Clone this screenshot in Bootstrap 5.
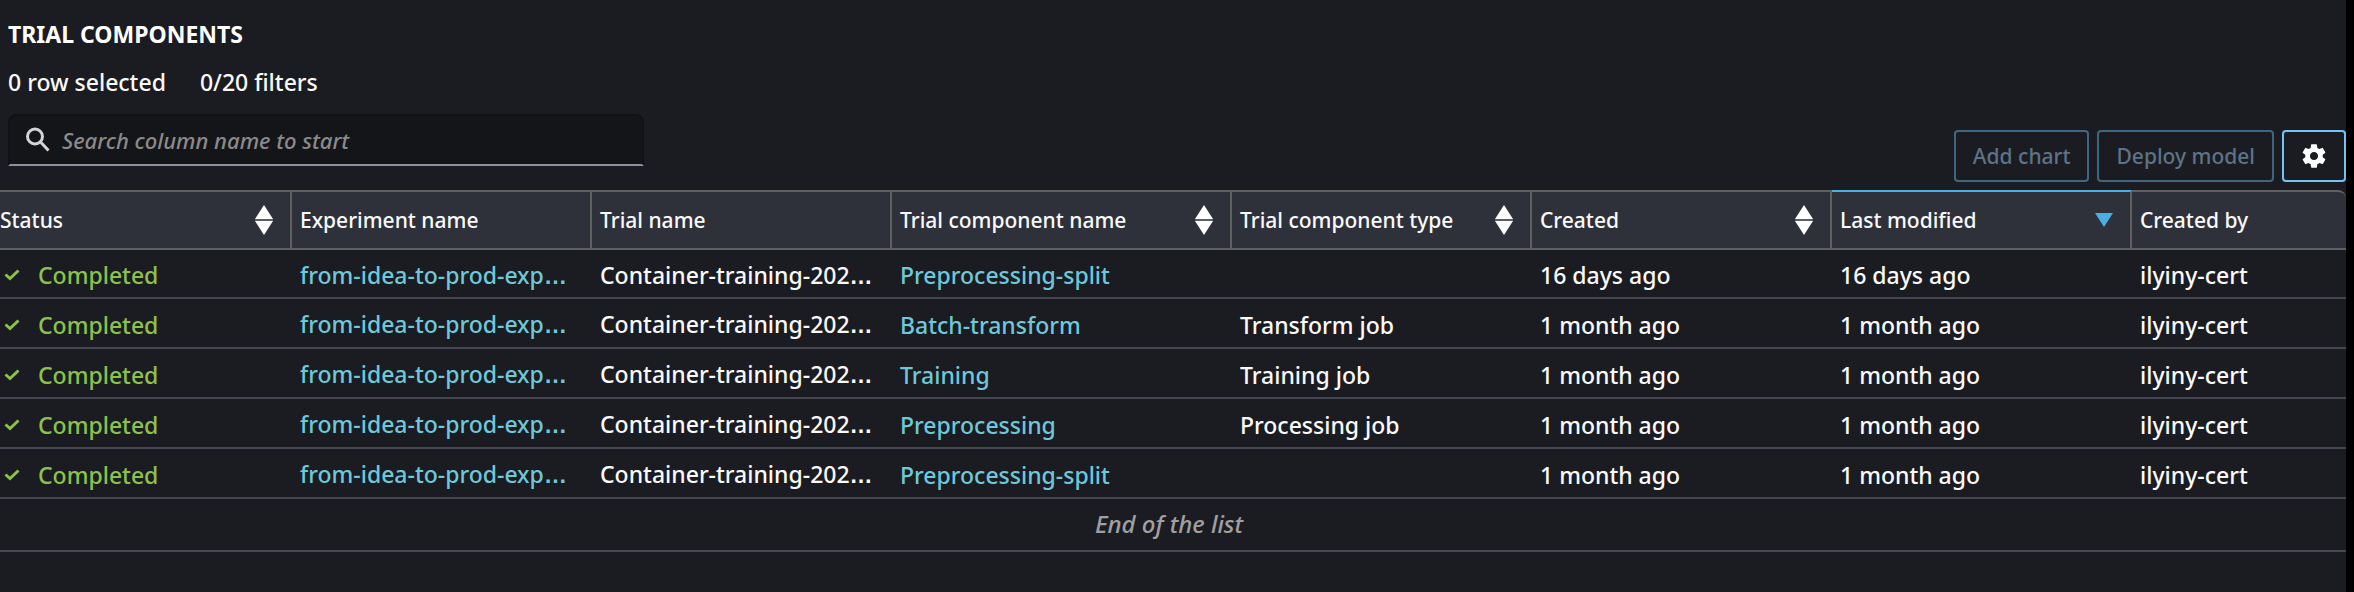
<!DOCTYPE html>
<html lang="en" data-bs-theme="dark">
<head>
<meta charset="utf-8">
<meta name="viewport" content="width=device-width, initial-scale=1">
<title>Trial components</title>
<link href="https://cdn.jsdelivr.net/npm/bootstrap@5.3.0/dist/css/bootstrap.min.css" rel="stylesheet">
<style>
  body { background: #1b1c21; color: #fafafa; font-family: "Noto Sans", "Open Sans", sans-serif; font-size: 23px; font-weight: 500; line-height: 32px; }
  .trial-panel { border-right: 8px solid #000; }
  .panel-head { padding: 18px 8px 0; }
  .panel-title { font-size: 23px; font-weight: 700; line-height: 32px; }
  .counts { gap: 34px; }
  .search-box { width: 636px; max-width: 100%; height: 52px; background: #141519; border: 2px solid #111216; border-bottom-color: #8e8fa0; border-radius: 8px 8px 0 0; padding: 0 16px; gap: 12px; }
  .search-box input { background: transparent; border: 0; outline: 0; color: inherit; font-style: italic; font-size: 22px; font-weight: 500; padding: 0; }
  .search-box input::placeholder { color: #8a8a8a; opacity: 1; }
  .tool-btn { height: 52px; border: 2px solid #3f6680; border-radius: 4px; color: #5d7389; font-size: 21px; font-weight: 500; padding: 0 17px; line-height: 32px; }
  .tool-btn:disabled { opacity: 1; color: #5d7389; border-color: #3f6680; }
  .gear-btn { width: 64px; border-color: #72c3f7; color: #fff; padding: 0; }
  .trial-table { table-layout: fixed; border-collapse: separate; border-spacing: 0; width: 100%; }
  .trial-table th { height: 60px; background: #2f313a; border-top: 2px solid #616161; border-bottom: 2px solid #616161; border-right: 2px solid #616161; font-size: 21px; font-weight: 500; padding: 0 17px 0 8px; white-space: nowrap; }
  .trial-table th:last-child { border-right: 0; border-top-right-radius: 8px; }
  .trial-table th:first-child, .trial-table td:first-child { padding-left: 0; }
  .trial-table th.sorted { border-top-color: #4aaee3; }
  .trial-table td { height: 50px; border-bottom: 2px solid #474754; padding: 3px 8px 0; white-space: nowrap; overflow: hidden; vertical-align: middle; }
  .trial-table tbody tr:first-child td { height: 49px; }
  .trial-table a { color: #6dc9da; text-decoration: none; }
  .trial-table tfoot td { height: 53px; padding: 0 8px 2px; text-align: center; font-size: 24px; font-style: italic; color: #a0a0a3; }
  .dots { font-family: "Liberation Sans", sans-serif; font-weight: 700; }
  .done { color: #8bc34a; gap: 18px; padding-left: 4px; }
  .w-status { width: 292px; } .w-std { width: 300px; } .w-name { width: 340px; }
</style>
</head>
<body>
<main class="trial-panel min-vh-100">
  <header class="panel-head">
    <h1 class="panel-title mb-3 mt-0">TRIAL COMPONENTS</h1>
    <div class="counts d-flex"><span>0 row selected</span><span>0/20 filters</span></div>
  </header>
  <div class="d-flex justify-content-between align-items-start ps-2 pt-3">
    <label class="search-box d-flex align-items-center">
      <svg width="24" height="26" viewBox="0 0 24 26" fill="none" stroke="#d4d4d4" stroke-width="3" aria-hidden="true"><circle cx="9" cy="9.500" r="7.500"/><path d="M14.500 15l8 8.500"/></svg>
      <input class="flex-grow-1" type="text" placeholder="Search column name to start" aria-label="Search column name">
    </label>
    <div class="d-flex gap-2 mt-3">
      <button class="btn tool-btn" type="button" disabled>Add chart</button>
      <button class="btn tool-btn" type="button" disabled>Deploy model</button>
      <button class="btn tool-btn gear-btn d-flex align-items-center justify-content-center" type="button" aria-label="Settings">
        <svg width="28" height="28" viewBox="0 0 24 24" fill="currentColor"><path d="M19.430 12.980c.04-.32.070-.64.070-.98s-.03-.66-.07-.98l2.110-1.650c.19-.15.24-.42.12-.64l-2-3.460c-.12-.22-.39-.3-.61-.22l-2.490 1c-.52-.4-1.080-.73-1.690-.98l-.38-2.650A.488.488 0 0 0 14 2h-4c-.25 0-.46.18-.49.420l-.38 2.650c-.61.25-1.170.59-1.690.98l-2.490-1c-.23-.09-.49 0-.61.220l-2 3.460c-.13.22-.07.49.120.640l2.110 1.650c-.04.32-.07.65-.07.980s.03.660.07.980l-2.110 1.650c-.19.15-.24.42-.12.640l2 3.460c.12.22.39.3.61.220l2.490-1c.52.4 1.080.73 1.690.980l.38 2.650c.03.24.24.42.49.420h4c.25 0 .46-.18.49-.42l.38-2.650c.61-.25 1.170-.59 1.690-.98l2.490 1c.23.090.49 0 .61-.22l2-3.460c.12-.22.070-.49-.12-.64l-2.110-1.650zM12 15.500c-1.930 0-3.500-1.570-3.500-3.500s1.570-3.500 3.500-3.500 3.500 1.570 3.500 3.500-1.570 3.500-3.500 3.500z"/></svg>
      </button>
    </div>
  </div>
  <svg class="d-none"><symbol id="sort" viewBox="0 0 18 30"><path d="M9 0l9 14H0zM0 16h18L9 30z" fill="#fff"/><path d="M0 15h18" stroke="#8a8b90" stroke-width="1"/></symbol>
    <symbol id="tick" viewBox="0 0 16 14"><path d="M1.500 6.500l4.500 4L14.500 2.500" fill="none" stroke="#8bc34a" stroke-width="3"/></symbol></svg>
  <table class="trial-table mt-2">
    <colgroup><col class="w-status"><col class="w-std"><col class="w-std"><col class="w-name"><col class="w-std"><col class="w-std"><col class="w-std"><col></colgroup>
    <thead>
      <tr>
        <th scope="col"><div class="d-flex justify-content-between align-items-center">Status<svg width="18" height="30"><use href="#sort"/></svg></div></th>
        <th scope="col">Experiment name</th>
        <th scope="col">Trial name</th>
        <th scope="col"><div class="d-flex justify-content-between align-items-center">Trial component name<svg width="18" height="30"><use href="#sort"/></svg></div></th>
        <th scope="col"><div class="d-flex justify-content-between align-items-center">Trial component type<svg width="18" height="30"><use href="#sort"/></svg></div></th>
        <th scope="col"><div class="d-flex justify-content-between align-items-center">Created<svg width="18" height="30"><use href="#sort"/></svg></div></th>
        <th scope="col" class="sorted" aria-sort="descending"><div class="d-flex justify-content-between align-items-center">Last modified<svg width="18" height="14" viewBox="0 0 18 14"><path d="M0 0h18L9 14z" fill="#4aaee3"/></svg></div></th>
        <th scope="col">Created by</th>
      </tr>
    </thead>
    <tbody>
      <tr><td><div class="done d-flex align-items-center"><svg width="16" height="14"><use href="#tick"/></svg>Completed</div></td><td><a href="#">from-idea-to-prod-exp<span class="dots">…</span></a></td><td>Container-training-202<span class="dots">…</span></td><td><a href="#">Preprocessing-split</a></td><td></td><td>16 days ago</td><td>16 days ago</td><td>ilyiny-cert</td></tr>
      <tr><td><div class="done d-flex align-items-center"><svg width="16" height="14"><use href="#tick"/></svg>Completed</div></td><td><a href="#">from-idea-to-prod-exp<span class="dots">…</span></a></td><td>Container-training-202<span class="dots">…</span></td><td><a href="#">Batch-transform</a></td><td>Transform job</td><td>1 month ago</td><td>1 month ago</td><td>ilyiny-cert</td></tr>
      <tr><td><div class="done d-flex align-items-center"><svg width="16" height="14"><use href="#tick"/></svg>Completed</div></td><td><a href="#">from-idea-to-prod-exp<span class="dots">…</span></a></td><td>Container-training-202<span class="dots">…</span></td><td><a href="#">Training</a></td><td>Training job</td><td>1 month ago</td><td>1 month ago</td><td>ilyiny-cert</td></tr>
      <tr><td><div class="done d-flex align-items-center"><svg width="16" height="14"><use href="#tick"/></svg>Completed</div></td><td><a href="#">from-idea-to-prod-exp<span class="dots">…</span></a></td><td>Container-training-202<span class="dots">…</span></td><td><a href="#">Preprocessing</a></td><td>Processing job</td><td>1 month ago</td><td>1 month ago</td><td>ilyiny-cert</td></tr>
      <tr><td><div class="done d-flex align-items-center"><svg width="16" height="14"><use href="#tick"/></svg>Completed</div></td><td><a href="#">from-idea-to-prod-exp<span class="dots">…</span></a></td><td>Container-training-202<span class="dots">…</span></td><td><a href="#">Preprocessing-split</a></td><td></td><td>1 month ago</td><td>1 month ago</td><td>ilyiny-cert</td></tr>
    </tbody>
    <tfoot><tr><td colspan="8">End of the list</td></tr></tfoot>
  </table>
</main>
<script src="https://cdn.jsdelivr.net/npm/bootstrap@5.3.0/dist/js/bootstrap.bundle.min.js"></script>
</body>
</html>
